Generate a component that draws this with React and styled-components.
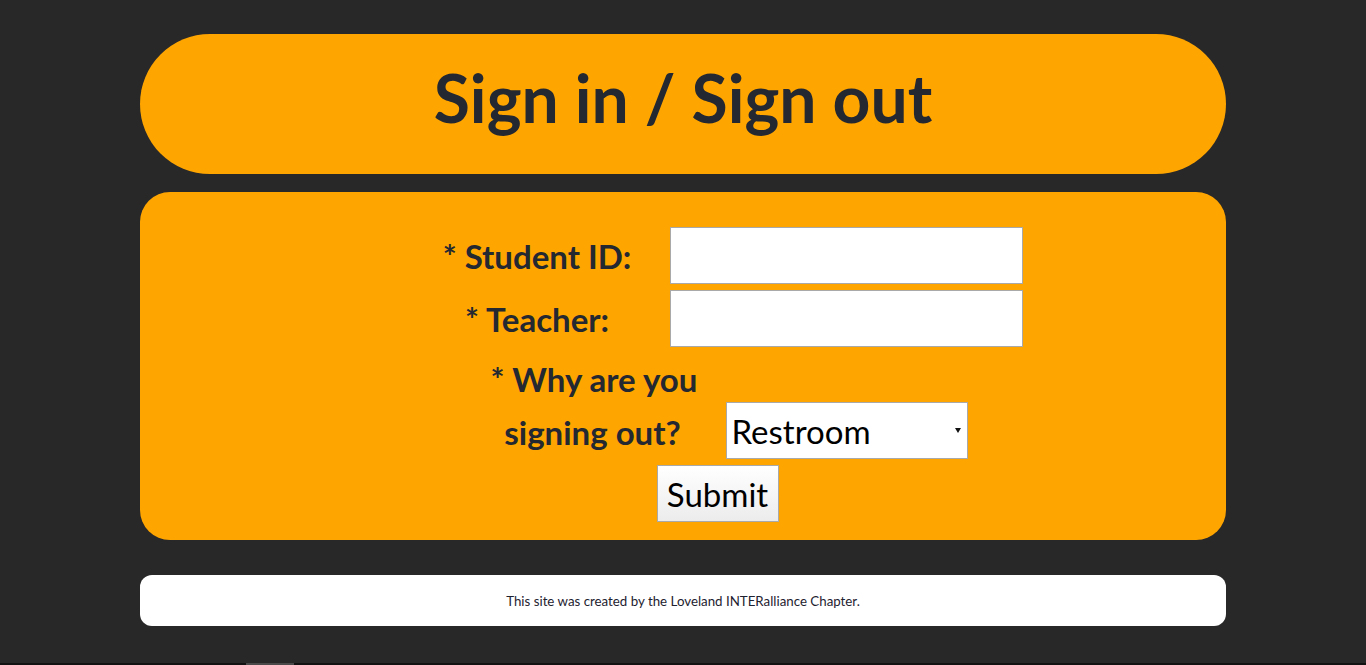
import React, { useState } from "react";
import styled, { createGlobalStyle } from "styled-components";

const FONT = `Lato, "DejaVu Sans Condensed", "Liberation Sans", sans-serif`;
const INK = "#242831";

// sign in / sign out page
function App() {
  const [studentId, setStudentId] = useState("");
  const [teacher, setTeacher] = useState("");
  const [reason, setReason] = useState("Restroom");

  return (
    <Page>
      <GlobalStyle />
      <Wrap>
        <Header>
          <Title>Sign in / Sign out</Title>
        </Header>

        <FormPanel onSubmit={(e) => e.preventDefault()}>
          <Row>
            <Label>* Student ID:</Label>
            <TextInput value={studentId} onChange={(e) => setStudentId(e.target.value)} />
          </Row>
          <Row>
            <Label>* Teacher:</Label>
            <TextInput value={teacher} onChange={(e) => setTeacher(e.target.value)} />
          </Row>
          <Row $bottom>
            <Label $tall>
              * Why are you
              <br />
              signing out?
            </Label>
            <SelectWrap>
              <Select value={reason} onChange={(e) => setReason(e.target.value)}>
                <option>Restroom</option>
                <option>Nurse</option>
                <option>Office</option>
                <option>Counselor</option>
                <option>Other</option>
              </Select>
            </SelectWrap>
          </Row>
          <SubmitRow>
            <SubmitButton type="submit">Submit</SubmitButton>
          </SubmitRow>
        </FormPanel>

        <Footer>This site was created by the Loveland INTERalliance Chapter.</Footer>
      </Wrap>
      <BottomStrip>
        <StripThumb />
      </BottomStrip>
    </Page>
  );
}

const GlobalStyle = createGlobalStyle`
  html, body {
    margin: 0;
    background: #282828;
  }
  body {
    font-family: ${FONT};
  }
`;

const Page = styled.div`
  min-height: 665px;
  display: flex;
  flex-direction: column;
  padding-top: 34px;
  box-sizing: border-box;
`;

const Wrap = styled.div`
  width: 1086px;
  margin: 0 auto;
`;

const Header = styled.div`
  height: 140px;
  border-radius: 70px;
  background: #ffa500;
  display: flex;
  justify-content: center;
  align-items: center;
`;

const Title = styled.h1`
  margin: 0 0 14px;
  font-family: ${FONT};
  font-size: 66px;
  font-weight: 700;
  color: ${INK};
`;

const FormPanel = styled.form`
  margin-top: 18px;
  background: #ffa500;
  border-radius: 30px;
  padding: 35px 0 18px 92px;
  display: flex;
  flex-direction: column;
  gap: 6px;
`;

const Row = styled.div`
  display: flex;
  justify-content: center;
  align-items: ${(p) => (p.$bottom ? "flex-end" : "center")};
  gap: 31px;
`;

const Label = styled.label`
  width: 204px;
  text-align: center;
  font-size: 33px;
  font-weight: 700;
  line-height: ${(p) => (p.$tall ? "53px" : "50px")};
  color: ${INK};
  white-space: nowrap;
`;

const TextInput = styled.input`
  width: 353px;
  height: 57px;
  box-sizing: border-box;
  border: 1px solid #a9a9a9;
  background: #fff;
  font-family: ${FONT};
  font-size: 30px;
  padding: 0 6px;
  outline: none;
`;

const SelectWrap = styled.div`
  position: relative;
  &::after {
    content: "";
    position: absolute;
    right: 7px;
    top: 26px;
    border-left: 3px solid transparent;
    border-right: 3px solid transparent;
    border-top: 5px solid #111;
    pointer-events: none;
  }
`;

const Select = styled.select`
  display: block;
  width: 242px;
  height: 57px;
  box-sizing: border-box;
  appearance: none;
  border: 1px solid #a9a9a9;
  border-radius: 0;
  background: #fff;
  color: #000;
  font-family: ${FONT};
  font-size: 33px;
  padding: 0 5px;
  outline: none;
`;

const SubmitRow = styled.div`
  display: flex;
  justify-content: center;
  padding-right: 23px;
`;

const SubmitButton = styled.button`
  width: 122px;
  height: 57px;
  box-sizing: border-box;
  border: 1px solid #a9a9a9;
  border-radius: 0;
  background: linear-gradient(#ffffff, #ececec);
  color: #000;
  font-family: ${FONT};
  font-size: 33px;
  padding: 0;
`;

const Footer = styled.div`
  margin-top: 35px;
  height: 51px;
  border-radius: 12px;
  background: #fff;
  display: flex;
  justify-content: center;
  align-items: center;
  font-size: 13.3px;
  color: #1e2230;
`;

const BottomStrip = styled.div`
  margin-top: auto;
  height: 2px;
  background: #121212;
  display: flex;
  padding-left: 246px;
`;

const StripThumb = styled.div`
  width: 48px;
  background: #4a4a4a;
`;

export default App;
